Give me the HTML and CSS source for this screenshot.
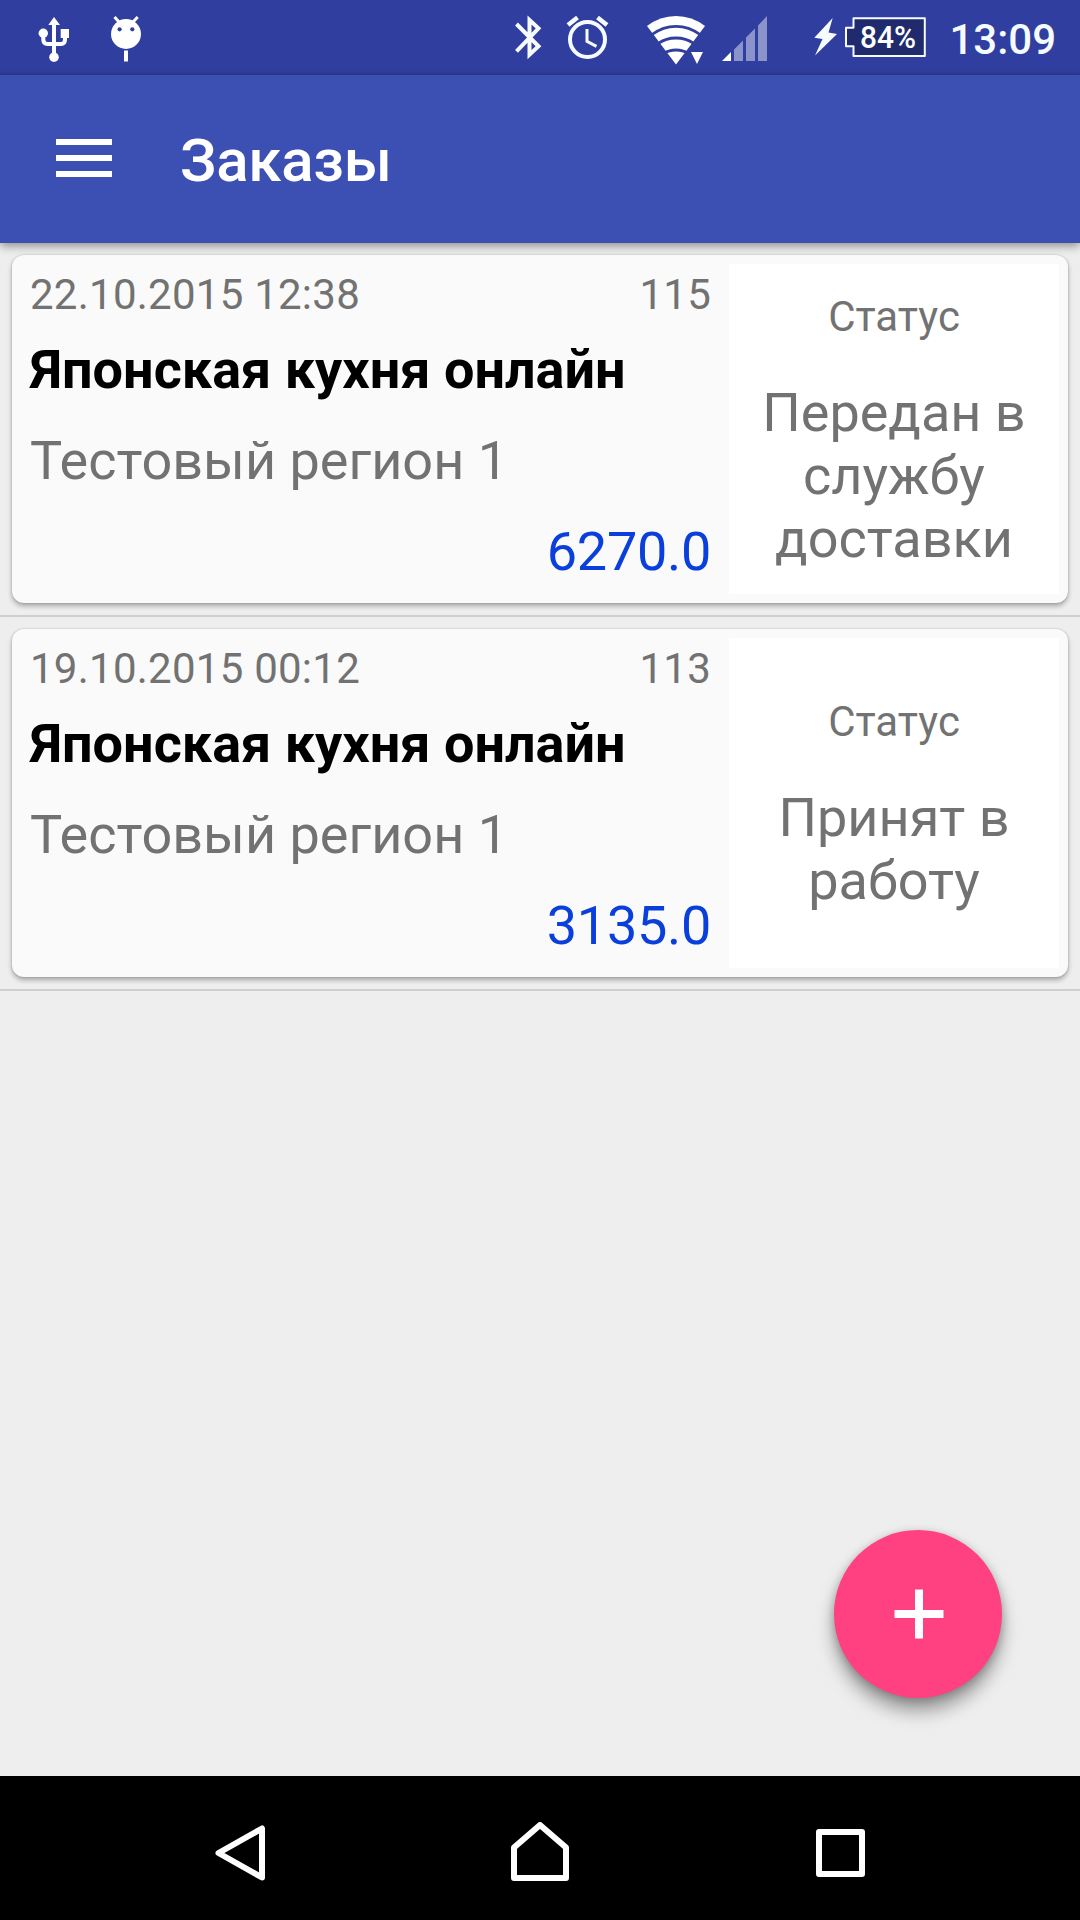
FILE: index.html
```html
<!DOCTYPE html>
<html lang="ru">
<head>
    <meta charset="UTF-8">
    <meta name="viewport" content="width=device-width, initial-scale=1.0">
    <title>Заказы</title>
    <link rel="stylesheet" href="styles.css">
</head>
<body>
    <div class="screen">
        <div class="status-bar">
            <div class="status-group">
                <svg class="icon-usb" width="34" height="48" viewBox="37 15 34 48">
                    <path d="M54 22V57M43.3 33V39.5Q43.3 44 47.5 44H61Q65 44 65 39.5V34" fill="none" stroke="#fff" stroke-width="4"/>
                    <path d="M54 17L60 25H48.3Z" fill="#fff"/>
                    <circle cx="43.3" cy="33.3" r="4.7" fill="#fff"/>
                    <circle cx="54" cy="57.2" r="4.8" fill="#fff"/>
                    <rect x="60.7" y="29" width="8.3" height="9" fill="#fff"/>
                </svg>
                <svg class="icon-debug" width="34" height="48" viewBox="109 15 34 48">
                    <path d="M114.5 17L119 22M137.7 17L133 22" stroke="#fff" stroke-width="3"/>
                    <circle cx="126" cy="34" r="15" fill="#fff"/>
                    <circle cx="119.6" cy="29.3" r="2.1" fill="#303f9f"/>
                    <circle cx="132.3" cy="29.3" r="2.1" fill="#303f9f"/>
                    <rect x="124" y="50.5" width="4" height="11" fill="#fff"/>
                </svg>
            </div>
            <div class="status-group">
                <svg width="30" height="48" viewBox="513 15 30 48">
                    <path d="M516.5 24L538.5 46.3L529.5 54.7V20L538.5 28.3L516.5 51.3" fill="none" stroke="#f5fbff" stroke-width="4"/>
                </svg>
                <svg class="icon-alarm" width="44" height="48" viewBox="565 15 44 48">
                    <circle cx="587.5" cy="39.5" r="17.5" fill="none" stroke="#f5fbff" stroke-width="4"/>
                    <path d="M568 25L577.5 17.5M597.5 17.5L607 25" stroke="#f5fbff" stroke-width="4.5"/>
                    <path d="M587 29V41.3L596.5 46.3" fill="none" stroke="#f5fbff" stroke-width="3"/>
                </svg>
                <svg class="icon-wifi" width="60" height="50" viewBox="646 15 60 50">
                    <path d="M676 64.5L647 26Q660 16 676 16Q692 16 705 26Z" fill="#fff"/>
                    <path d="M652 34.5Q663 26.3 676 26.3Q689 26.3 700 34.5M658 43.7Q666 38 676 38Q686 38 694 43.7M664 53.3Q669 50 676 50Q683 50 688 53.3" fill="none" stroke="#303f9f" stroke-width="2.8"/>
                    <path d="M691 52H703L697 64Z" fill="#fff"/>
                </svg>
                <svg class="icon-signal" width="46" height="46" viewBox="722 15 46 46">
                    <path d="M722 61L731 52V61Z" fill="#fff"/>
                    <path d="M734 61V49.5L743 40.5V61ZM746 61V37.5L755 28.5V61ZM758 61V25.5L767 16V61Z" fill="#8b94ca"/>
                </svg>
                <svg class="icon-battery" width="114" height="48" viewBox="813 14 114 48">
                    <path d="M832.7 18L814.3 37.8L822.5 39L815 55.5L837 34L828.5 32.5Z" fill="#f5fbff"/>
                    <path d="M853.5 18.2H924.8V56H853.5V46.2H846V27.8H853.5Z" fill="#1f2b6c" stroke="#f5fbff" stroke-width="2" stroke-linejoin="round"/>
                    <text class="battery-text" x="860" y="47.8" textLength="56" lengthAdjust="spacingAndGlyphs">84%</text>
                </svg>
                <span class="clock">13:09</span>
            </div>
        </div>

        <div class="toolbar">
            <svg width="56" height="38" viewBox="0 0 56 38">
                <path d="M0 3H56M0 19H56M0 35H56" stroke="#fff" stroke-width="6"/>
            </svg>
            <h1 class="toolbar-title">Заказы</h1>
        </div>

        <div class="orders">
            <div class="order">
                <div class="card">
                    <div class="info">
                        <div class="info-top">
                            <span>22.10.2015 12:38</span>
                            <span>115</span>
                        </div>
                        <div class="name">Японская кухня онлайн</div>
                        <div class="region">Тестовый регион 1</div>
                        <div class="price">6270.0</div>
                    </div>
                    <div class="state">
                        <div class="state-label">Статус</div>
                        <div class="state-value">Передан в службу доставки</div>
                    </div>
                </div>
            </div>
            <div class="order">
                <div class="card">
                    <div class="info">
                        <div class="info-top">
                            <span>19.10.2015 00:12</span>
                            <span>113</span>
                        </div>
                        <div class="name">Японская кухня онлайн</div>
                        <div class="region">Тестовый регион 1</div>
                        <div class="price">3135.0</div>
                    </div>
                    <div class="state">
                        <div class="state-label">Статус</div>
                        <div class="state-value">Принят в работу</div>
                    </div>
                </div>
            </div>
            <button class="fab" aria-label="Добавить">
                <svg width="50" height="50" viewBox="0 0 50 50">
                    <path d="M25 0.5V49.5M0.5 25H49.5" stroke="#fff" stroke-width="8"/>
                </svg>
            </button>
        </div>

        <div class="nav-bar">
            <svg width="60" height="60" viewBox="210 1822 60 60">
                <path d="M262 1828.5V1877.5L218.5 1853Z" fill="none" stroke="#fff" stroke-width="6" stroke-linejoin="round"/>
            </svg>
            <svg width="60" height="60" viewBox="510 1822 60 60">
                <path d="M514 1878V1847.5L540 1825L566 1847.5V1878Z" fill="none" stroke="#fff" stroke-width="6" stroke-linejoin="round"/>
            </svg>
            <svg width="60" height="60" viewBox="810 1822 60 60">
                <rect x="819" y="1832" width="43" height="42" fill="none" stroke="#fff" stroke-width="6" stroke-linejoin="round"/>
            </svg>
        </div>
    </div>
</body>
</html>
```
FILE: styles.css
```css
* {
    box-sizing: border-box;
}
body {
    margin: 0;
    font-family: Roboto, sans-serif;
    background-color: #eeeeee;
    color: #727272;
}
svg {
    display: block;
    flex-shrink: 0;
}
.screen {
    width: 1080px;
    height: 1920px;
    display: flex;
    flex-direction: column;
    overflow: hidden;
}
.status-bar {
    height: 75px;
    display: flex;
    justify-content: space-between;
    padding: 15px 24px 0 37px;
    background: linear-gradient(#303f9f 72px, #2b3990 75px);
}
.status-group {
    display: flex;
    align-items: flex-start;
}
.icon-debug {
    margin-left: 38px;
}
.icon-alarm {
    margin-left: 22px;
}
.icon-wifi {
    margin-left: 37px;
}
.icon-signal {
    margin-left: 16px;
}
.icon-battery {
    margin: -1px 0 0 45px;
}
.battery-text {
    font-size: 31px;
    font-weight: 500;
    fill: #fff;
}
.clock {
    margin-left: 22px;
    font-size: 42px;
    font-weight: 500;
    line-height: 49px;
    color: #f5fbff;
}
.toolbar {
    height: 168px;
    display: flex;
    align-items: center;
    gap: 68px;
    padding: 0 56px 2px;
    background-color: #3c50b4;
    box-shadow: 0 3px 9px rgba(0, 0, 0, 0.4);
    z-index: 1;
}
.toolbar-title {
    margin: 6px 0 0;
    font-size: 60px;
    font-weight: 500;
    line-height: 70px;
    letter-spacing: -0.25px;
    color: #fff;
}
.orders {
    position: relative;
    flex: 1;
}
.order {
    padding: 12px;
    border-bottom: 2px solid #cfcfcf;
}
.card {
    height: 348px;
    display: flex;
    padding: 9px;
    border-radius: 12px;
    background-color: #fafafa;
    box-shadow: 0 3px 5px rgba(0, 0, 0, 0.3), 0 0 2px rgba(0, 0, 0, 0.2);
}
.info {
    width: 708px;
    padding: 6px 18px 0 9px;
}
.info-top {
    display: flex;
    justify-content: space-between;
    font-size: 42px;
    line-height: 49px;
    letter-spacing: 0.25px;
}
.name {
    margin-top: 19px;
    font-size: 54px;
    font-weight: bold;
    line-height: 63px;
    color: #000;
}
.region {
    margin-top: 28px;
    font-size: 54px;
    line-height: 63px;
}
.price {
    margin-top: 28px;
    font-size: 54px;
    line-height: 63px;
    letter-spacing: -0.3px;
    text-align: right;
    color: #0a3fdb;
}
.state {
    width: 330px;
    display: flex;
    flex-direction: column;
    justify-content: center;
    padding: 3px 24px 0;
    background-color: #fff;
    text-align: center;
}
.state-label {
    font-size: 42px;
    line-height: 49px;
}
.state-value {
    margin-top: 40px;
    font-size: 54px;
    line-height: 63px;
}
.fab {
    position: absolute;
    right: 78px;
    bottom: 78px;
    width: 168px;
    height: 168px;
    display: flex;
    justify-content: center;
    align-items: center;
    padding: 0 0 0 2px;
    border: none;
    border-radius: 50%;
    background-color: #ff4081;
    box-shadow: 0 13px 18px rgba(0, 0, 0, 0.36), 0 2px 8px rgba(0, 0, 0, 0.2);
    cursor: pointer;
}
.nav-bar {
    height: 144px;
    display: flex;
    justify-content: space-between;
    padding: 46px 210px 0;
    background-color: #000;
}
```
